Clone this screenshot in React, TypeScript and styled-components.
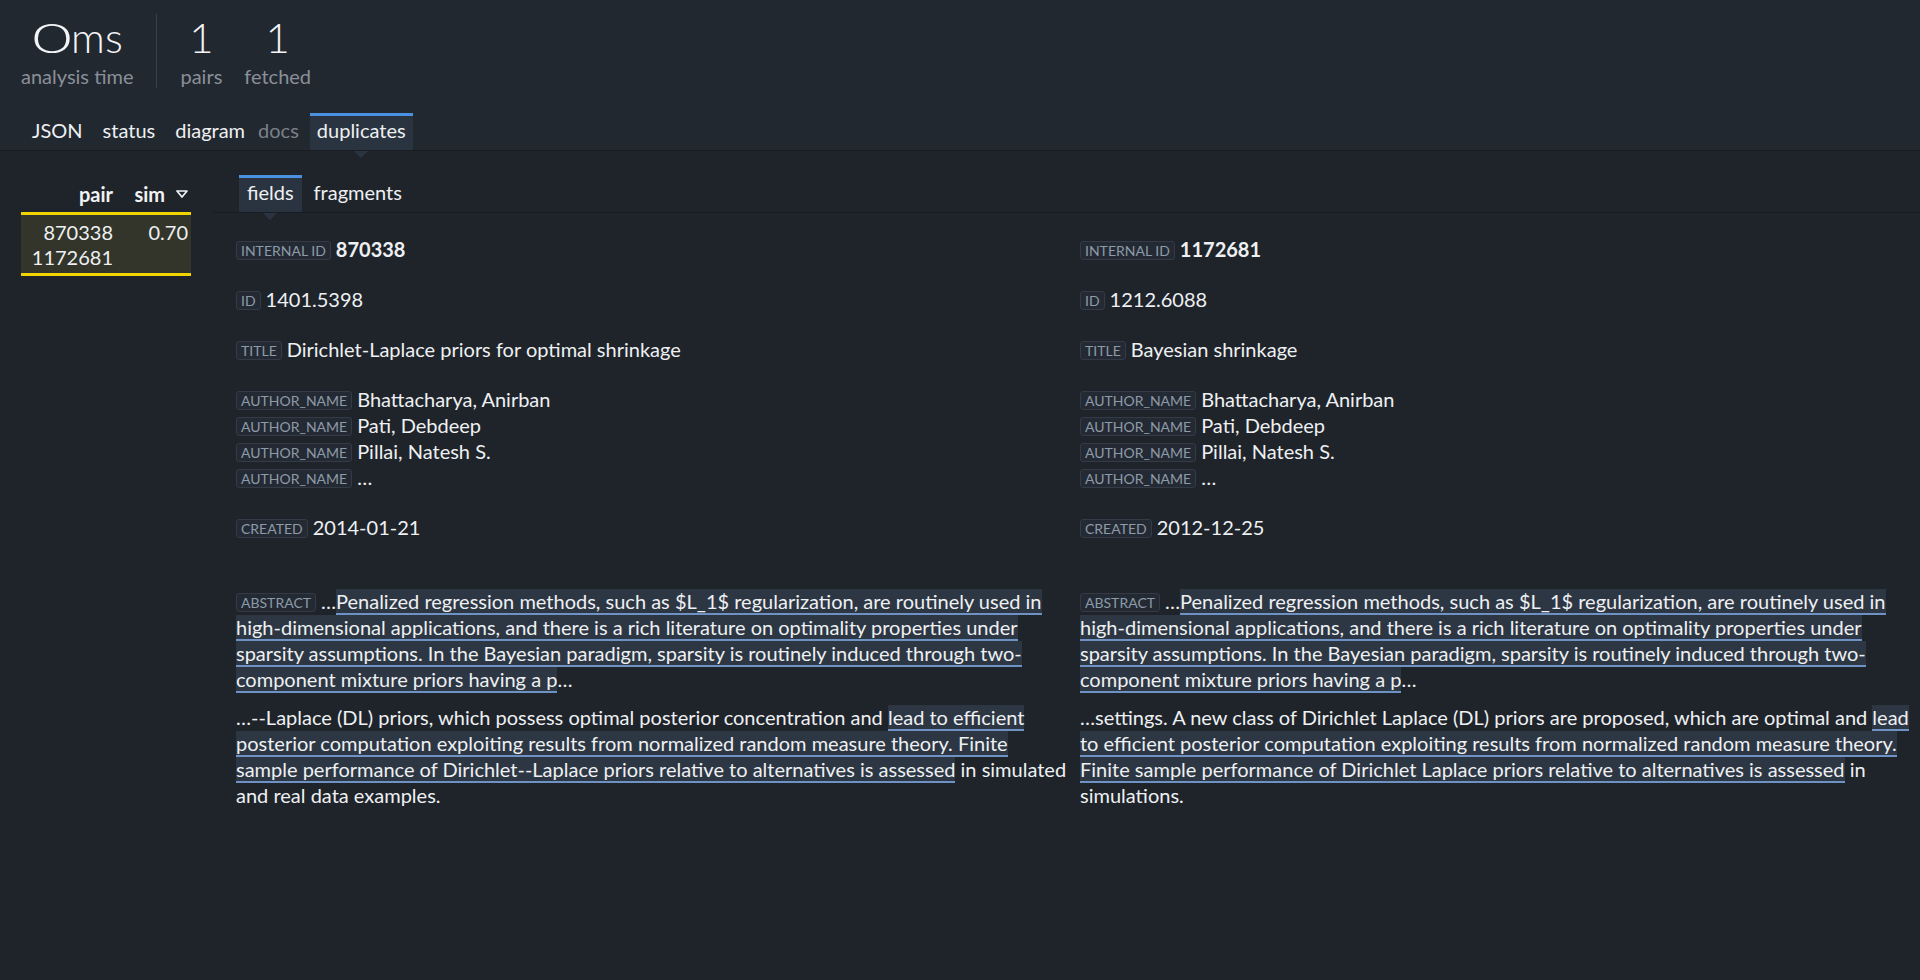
import React from "react";
import styled, { createGlobalStyle } from "styled-components";

const GlobalStyle = createGlobalStyle`
  html, body {
    margin: 0;
    padding: 0;
    background: #1f242b;
    color: #eceef1;
    font-family: "Lato", "Noto Sans", sans-serif;
    -webkit-font-smoothing: antialiased;
  }
  #root { min-height: 980px; }
`;

const Page = styled.div`
  min-height: 980px;
  background: #1f242b;
`;

const Header = styled.header`
  background: #222830;
  border-bottom: 1px solid #191d23;
  padding: 14px 0 0 21px;
`;

const StatsRow = styled.div`
  display: flex;
  align-items: stretch;
  gap: 22px;
`;

const Stat = styled.div`
  display: flex;
  flex-direction: column;
  align-items: center;
  padding-top: 2px;
`;

const StatValue = styled.div`
  font-size: 42px;
  line-height: 42px;
  font-weight: 300;
  color: #f3f4f6;
`;

const WideZero = styled.span`
  display: inline-block;
  transform: scaleX(1.65);
  margin: 0 7px 0 8px;
`;

const StatLabel = styled.div`
  margin-top: 6px;
  font-size: 20px;
  line-height: 24px;
  color: #8a9099;
`;

const StatDivider = styled.div`
  width: 1px;
  background: #3a414a;
  margin: 0 1px;
`;

const TabBar = styled.nav`
  display: flex;
  gap: 6px;
  margin-top: 25px;
  padding-left: 4px;
`;

const Tab = styled.div<{ $active?: boolean; $muted?: boolean }>`
  position: relative;
  font-size: 20px;
  line-height: 29px;
  padding: ${(p) => (p.$muted ? "0 5px 5px 0" : "0 7px 5px")};
  border-top: 3px solid ${(p) => (p.$active ? "#4a91e2" : "transparent")};
  background: ${(p) => (p.$active ? "#2a3440" : "transparent")};
  color: ${(p) => (p.$muted ? "#7b8189" : "#eef0f2")};
  &::after {
    content: "";
    display: ${(p) => (p.$active ? "block" : "none")};
    position: absolute;
    left: 50%;
    bottom: -8px;
    margin-left: -7px;
    border-left: 7px solid transparent;
    border-right: 7px solid transparent;
    border-top: 7px solid #2a3440;
    z-index: 2;
  }
`;

const Body = styled.div`
  display: flex;
  align-items: flex-start;
`;

const Sidebar = styled.aside`
  width: 170px;
  flex: none;
  padding: 24px 22px 0 21px;
`;

const PairGrid = styled.div`
  display: grid;
  grid-template-columns: 95px 75px;
`;

const HeadCell = styled.div`
  display: flex;
  justify-content: flex-end;
  align-items: center;
  gap: 11px;
  height: 37px;
  padding-right: 3px;
  font-size: 20px;
  font-weight: 700;
  color: #f1f2f4;
`;

const PairRow = styled.div`
  grid-column: 1 / span 2;
  display: grid;
  grid-template-columns: 95px 75px;
  background: #33352b;
  border-top: 3px solid #f0d400;
  border-bottom: 3px solid #f0d400;
  padding: 5px 0 3px;
`;

const Cell = styled.div`
  text-align: right;
  padding-right: 3px;
  font-size: 20px;
  line-height: 25px;
  color: #eef0f2;
`;

const Pane = styled.main`
  flex: 1;
  min-width: 0;
`;

const SubTabBar = styled.div`
  display: flex;
  gap: 4px;
  margin-top: 24px;
  padding-left: 26px;
  border-bottom: 1px solid #191d23;
`;

const SubTab = styled(Tab)`
  padding: 0 8px 5px;
`;

const FieldsGrid = styled.div`
  display: grid;
  grid-template-columns: 1fr 1fr;
  column-gap: 8px;
  padding: 23px 4px 0 23px;
`;

const Column = styled.section`
  min-width: 0;
  font-size: 20px;
  line-height: 26px;
  color: #eef0f2;
`;

const FieldBlock = styled.div<{ $spaced?: boolean }>`
  padding-top: ${(p) => (p.$spaced ? "24px" : "0")};
  margin-bottom: 24px;
`;

const Line = styled.div<{ $bold?: boolean }>`
  font-weight: ${(p) => (p.$bold ? 700 : 400)};
`;

const Badge = styled.span`
  display: inline-block;
  vertical-align: 1px;
  font-size: 14px;
  line-height: 17px;
  font-weight: 400;
  padding: 0 4px;
  margin-right: 5px;
  border: 1px solid #343b46;
  border-radius: 3px;
  background: #242a33;
  color: #8d9aa9;
`;

const Paragraph = styled.p`
  margin: 0 0 12px;
`;

const Hl = styled.span`
  background: #2d3744;
  border-bottom: 2px solid #6f92c4;
`;

const SortIcon = () => (
  <svg width="12" height="8" viewBox="0 0 12 8" aria-hidden="true">
    <polygon
      points="1,1 11,1 6,7"
      fill="none"
      stroke="#f1f2f4"
      strokeWidth="1.7"
      strokeLinejoin="round"
    />
  </svg>
);

type Seg = { t: string; hl?: boolean };

type Doc = {
  internalId: string;
  id: string;
  title: string;
  authors: string[];
  created: string;
  abstract: Seg[][];
};

const para1: Seg[] = [
  { t: "…" },
  {
    t: "Penalized regression methods, such as $L_1$ regularization, are routinely used in high-dimensional applications, and there is a rich literature on optimality properties under sparsity assumptions. In the Bayesian paradigm, sparsity is routinely induced through two-component mixture priors having a p",
    hl: true,
  },
  { t: "…" },
];

const docs: Doc[] = [
  {
    internalId: "870338",
    id: "1401.5398",
    title: "Dirichlet-Laplace priors for optimal shrinkage",
    authors: ["Bhattacharya, Anirban", "Pati, Debdeep", "Pillai, Natesh S.", "…"],
    created: "2014-01-21",
    abstract: [
      para1,
      [
        { t: "…--Laplace (DL) priors, which possess optimal posterior concentration and " },
        {
          t: "lead to efficient posterior computation exploiting results from normalized random measure theory. Finite sample performance of Dirichlet--Laplace priors relative to alternatives is assessed",
          hl: true,
        },
        { t: " in simulated and real data examples." },
      ],
    ],
  },
  {
    internalId: "1172681",
    id: "1212.6088",
    title: "Bayesian shrinkage",
    authors: ["Bhattacharya, Anirban", "Pati, Debdeep", "Pillai, Natesh S.", "…"],
    created: "2012-12-25",
    abstract: [
      para1,
      [
        { t: "…settings. A new class of Dirichlet Laplace (DL) priors are proposed, which are optimal and " },
        {
          t: "lead to efficient posterior computation exploiting results from normalized random measure theory. Finite sample performance of Dirichlet Laplace priors relative to alternatives is assessed",
          hl: true,
        },
        { t: " in simulations." },
      ],
    ],
  },
];

const renderSegs = (segs: Seg[]) =>
  segs.map((s, i) => (s.hl ? <Hl key={i}>{s.t}</Hl> : <React.Fragment key={i}>{s.t}</React.Fragment>));

const DocColumn = ({ doc }: { doc: Doc }) => (
  <Column>
    <FieldBlock>
      <Line $bold>
        <Badge>INTERNAL ID</Badge>
        {doc.internalId}
      </Line>
    </FieldBlock>
    <FieldBlock>
      <Line>
        <Badge>ID</Badge>
        {doc.id}
      </Line>
    </FieldBlock>
    <FieldBlock>
      <Line>
        <Badge>TITLE</Badge>
        {doc.title}
      </Line>
    </FieldBlock>
    <FieldBlock>
      {doc.authors.map((a, i) => (
        <Line key={i}>
          <Badge>AUTHOR_NAME</Badge>
          {a}
        </Line>
      ))}
    </FieldBlock>
    <FieldBlock>
      <Line>
        <Badge>CREATED</Badge>
        {doc.created}
      </Line>
    </FieldBlock>
    <FieldBlock $spaced>
      {doc.abstract.map((p, i) => (
        <Paragraph key={i}>
          {i === 0 && <Badge>ABSTRACT</Badge>}
          {renderSegs(p)}
        </Paragraph>
      ))}
    </FieldBlock>
  </Column>
);

export default function App() {
  return (
    <Page>
      <GlobalStyle />
      <Header>
        <StatsRow>
          <Stat>
            <StatValue>
              <WideZero>0</WideZero>ms
            </StatValue>
            <StatLabel>analysis time</StatLabel>
          </Stat>
          <StatDivider />
          <Stat>
            <StatValue>1</StatValue>
            <StatLabel>pairs</StatLabel>
          </Stat>
          <Stat>
            <StatValue>1</StatValue>
            <StatLabel>fetched</StatLabel>
          </Stat>
        </StatsRow>
        <TabBar>
          <Tab>JSON</Tab>
          <Tab>status</Tab>
          <Tab>diagram</Tab>
          <Tab $muted>docs</Tab>
          <Tab $active>duplicates</Tab>
        </TabBar>
      </Header>
      <Body>
        <Sidebar>
          <PairGrid>
            <HeadCell>pair</HeadCell>
            <HeadCell>
              sim
              <SortIcon />
            </HeadCell>
            <PairRow>
              <Cell>
                870338
                <br />
                1172681
              </Cell>
              <Cell>0.70</Cell>
            </PairRow>
          </PairGrid>
        </Sidebar>
        <Pane>
          <SubTabBar>
            <SubTab $active>fields</SubTab>
            <SubTab>fragments</SubTab>
          </SubTabBar>
          <FieldsGrid>
            {docs.map((d) => (
              <DocColumn key={d.internalId} doc={d} />
            ))}
          </FieldsGrid>
        </Pane>
      </Body>
    </Page>
  );
}
